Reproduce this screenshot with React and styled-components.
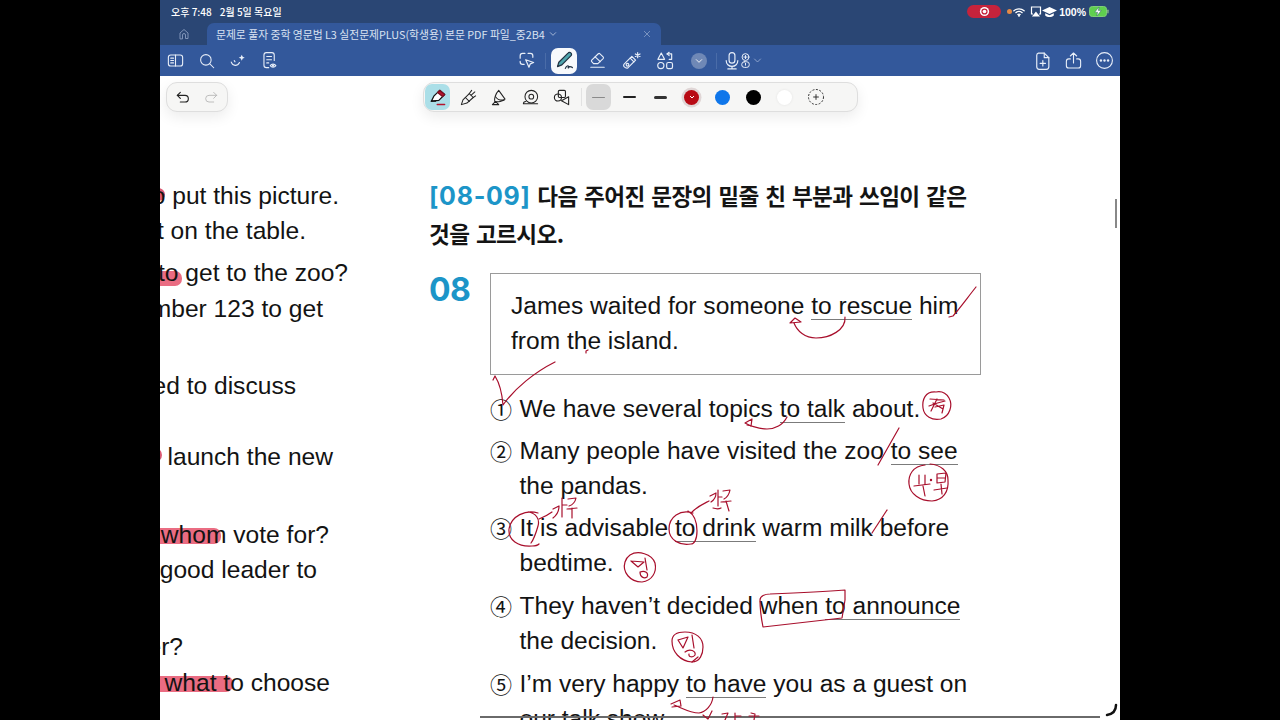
import React from 'react';
import styled, { createGlobalStyle } from 'styled-components';

const Global = createGlobalStyle`
  html, body { margin: 0; padding: 0; background: #000; height: 100%; }
  #root { height: 100%; }
`;

const KR = `"Noto Sans CJK KR", "Noto Sans", sans-serif`;
const LATIN = `"Liberation Sans", "Noto Sans CJK KR", sans-serif`;

const Screen = styled.div`
  position: relative;
  width: 960px;
  height: 720px;
  margin: 0 auto;
  background: #fff;
  overflow: hidden;
  display: flex;
  flex-direction: column;
  font-family: ${LATIN};
`;

const StatusBar = styled.div`
  height: 23px;
  flex: none;
  background: #2a4674;
  color: #fff;
  display: flex;
  align-items: center;
  padding: 0 11px;
  font: 500 10px ${KR};
`;
const StatusTime = styled.span`margin-right: 8px;`;
const StatusRight = styled.div`
  margin-left: auto;
  display: flex;
  align-items: center;
`;
const RecPill = styled.div`
  width: 34px;
  height: 13px;
  border-radius: 7px;
  background: #c5233c;
  display: flex;
  align-items: center;
  justify-content: center;
  margin-right: 6px;
`;
const OrangeDot = styled.span`
  flex: none;
  width: 5px;
  height: 5px;
  border-radius: 50%;
  background: #e58a45;
`;
const StatusGlyph = styled.span`
  display: flex;
  margin-left: ${p => p.$ml || 0}px;
`;
const Percent = styled.span`
  font: 700 10.5px ${LATIN};
  margin: 0 3px 0 2px;
`;

const TabBar = styled.div`
  height: 22px;
  flex: none;
  background: #2a4674;
  display: flex;
  align-items: stretch;
`;
const HomeSlot = styled.div`
  width: 47px;
  display: flex;
  align-items: center;
  justify-content: center;
  color: #8ea2c4;
`;
const Tab = styled.div`
  width: 454px;
  background: #33589b;
  border-radius: 7px 7px 0 0;
  display: flex;
  align-items: center;
  padding: 0 10px 0 9px;
  box-sizing: border-box;
  color: #d9e2f1;
  font: 400 10.8px ${KR};
  white-space: nowrap;
`;
const TabClose = styled.span`margin-left: auto; display: flex; color: #9db1d3;`;
const TabChevron = styled.span`margin-left: 4px; display: flex;`;

const ToolBar = styled.div`
  height: 31px;
  flex: none;
  background: #33589b;
  color: #e8eef8;
  display: flex;
  align-items: center;
`;
const ToolGroup = styled.div`
  display: flex;
  align-items: center;
  margin-left: ${p => p.$ml || 0}px;
`;
const ToolSlot = styled.div`
  width: ${p => p.$w || 31}px;
  height: 26px;
  display: flex;
  align-items: center;
  justify-content: center;
`;
const ActiveTile = styled.div`
  width: 26px;
  height: 26px;
  border-radius: 7px;
  background: #f7f9fc;
  display: flex;
  align-items: center;
  justify-content: center;
  margin: 0 3px;
`;
const RoundChevron = styled.div`
  width: 16px;
  height: 16px;
  border-radius: 50%;
  background: #6f88b6;
  display: flex;
  align-items: center;
  justify-content: center;
`;
const BarDivider = styled.span`
  width: 1px;
  height: 16px;
  background: #4a6ca8;
  flex: none;
  margin: 0 ${p => p.$mr ?? 0}px 0 ${p => p.$ml ?? 0}px;
`;
const VoiceBadge = styled.span`
  display: flex;
  margin-left: -9px;
`;
const VoiceChevron = styled.span`
  display: flex;
  color: #a8badb;
`;

const FloatRow = styled.div`
  flex: none;
  height: 30px;
  padding-top: 6px;
  display: flex;
  align-items: stretch;
  padding-left: 6px;
`;
const Pill = styled.div`
  box-sizing: border-box;
  height: 30px;
  background: #f6f6f5;
  border: 1px solid #dedede;
  border-radius: 11px;
  box-shadow: 0 5px 14px rgba(0,0,0,.08);
  display: flex;
  align-items: center;
`;
const UndoPill = styled(Pill)`
  width: 62px;
  justify-content: space-around;
  padding: 0 2px;
  color: #222;
`;
const PenPill = styled(Pill)`
  width: 435px;
  margin-left: 195px;
  padding-left: 1px;
  color: #222;
`;
const PenSlot = styled.div`
  flex: none;
  width: 25px;
  height: 26px;
  margin-right: 6px;
  border-radius: 7px;
  background: ${p => p.$bg || 'transparent'};
  display: flex;
  align-items: center;
  justify-content: center;
`;
const PenDivider = styled.span`
  flex: none;
  width: 1px;
  height: 18px;
  background: #e2e2e2;
  margin: 0 4px 0 1px;
`;
const Stroke = styled.span`
  display: block;
  width: 13px;
  height: ${p => p.$h}px;
  border-radius: 2px;
  background: ${p => p.$c};
`;
const Swatch = styled.span`
  display: flex;
  align-items: center;
  justify-content: center;
  width: 15px;
  height: 15px;
  border-radius: 50%;
  background: ${p => p.$c};
  box-shadow: ${p => p.$ring || 'none'};
`;

const Pages = styled.div`
  flex: 1;
  min-height: 0;
  display: grid;
  grid-template-columns: 269px 1fr;
  color: #131313;
`;
const LeftColumn = styled.div`
  overflow: hidden;
  padding-top: 66px;
  font-size: 24.6px;
  line-height: 35px;
`;
const LeftInner = styled.div`
  position: relative;
  z-index: 0;
`;
const LeftLine = styled.div`
  position: relative;
  display: flex;
  justify-content: flex-end;
  width: ${p => p.$end}px;
  margin-top: ${p => p.$gap || 0}px;
  white-space: pre;
  height: 35px;
`;
const Mark = styled.span`
  position: relative;
  &::before {
    content: '';
    position: absolute;
    z-index: -1;
    left: -30px;
    right: ${p => p.$trim || 0}px;
    top: ${p => p.$top}px;
    height: ${p => p.$h}px;
    background: ${p => p.$c || '#ea6c82'};
    border-radius: 7px;
  }
`;

const RightColumn = styled.div`
  padding-top: 65px;
`;
const Heading = styled.h2`
  margin: 0;
  font: 700 22.6px/37px ${KR};
  letter-spacing: -0.6px;
  word-spacing: 2px;
  color: #141414;
  width: 560px;
`;
const Range = styled.span`
  font-family: "Inter", sans-serif;
  font-weight: 700;
  font-size: 25px;
  letter-spacing: 0.7px;
  color: #1c95c8;
`;
const Question = styled.div`
  display: grid;
  grid-template-columns: 61px 491px;
  margin-top: 21px;
`;
const QNum = styled.div`
  font: 700 32px/34px "Inter", sans-serif;
  letter-spacing: -0.5px;
  color: #1c95c8;
`;
const Box = styled.div`
  box-sizing: border-box;
  height: 102px;
  border: 1px solid #9a9a9a;
  padding: 14px 0 0 20px;
  font-size: 24.55px;
  line-height: 35px;
  white-space: nowrap;
`;
const Under = styled.span`
  border-bottom: 1px solid #7b7b7b;
`;
const Options = styled.ol`
  list-style: none;
  margin: 16px 0 0 61px;
  padding: 0;
`;
const Option = styled.li`
  display: grid;
  grid-template-columns: 29.5px 1fr;
  margin-top: ${p => p.$gap}px;
  font-size: 24.55px;
  line-height: 35px;
  white-space: nowrap;
`;
const Marker = styled.span`
  font: 400 22px/35px ${KR};
`;

const Ink = styled.svg`
  position: absolute;
  inset: 0;
  pointer-events: none;
`;
const ScrollThumb = styled.span`
  position: absolute;
  right: 3px;
  top: 199px;
  width: 2px;
  height: 29px;
  background: #888;
`;
const BottomRule = styled.span`
  position: absolute;
  left: 320px;
  bottom: 2px;
  width: 620px;
  height: 2px;
  background: #6a6a6a;
`;

const Ic = ({ s = 18, w = 1.5, children, c = 'currentColor' }) => (
  <svg width={s} height={s} viewBox="0 0 24 24" fill="none" stroke={c} strokeWidth={w} strokeLinecap="round" strokeLinejoin="round">{children}</svg>
);

const Chevron = ({ s = 8, c = 'currentColor', w = 2 }) => <Ic s={s} w={w} c={c}><path d="M4 8l8 8 8-8" /></Ic>;

const App = () => (
  <>
    <Global />
    <Screen>
      <StatusBar>
        <StatusTime>오후 7:48</StatusTime>
        <span>2월 5일 목요일</span>
        <StatusRight>
          <RecPill>
            <svg width="11" height="11" viewBox="0 0 12 12"><circle cx="6" cy="6" r="5" fill="#fff" /><circle cx="6" cy="6" r="3.4" fill="#c5233c" /><circle cx="6" cy="6" r="2" fill="#fff" /></svg>
          </RecPill>
          <OrangeDot />
          <StatusGlyph $ml={1}>
            <svg width="12" height="10" viewBox="0 0 14 11" fill="none" stroke="#fff" strokeWidth="1.5" strokeLinecap="round"><path d="M1 4c3.400-3 8.600-3 12 0" /><path d="M3.300 6.300c2.200-1.800 5.200-1.800 7.400 0" /><path d="M5.600 8.400c.8-.6 2-.6 2.800 0" /><circle cx="7" cy="9.800" r=".5" fill="#fff" /></svg>
          </StatusGlyph>
          <StatusGlyph $ml={5}>
            <svg width="12" height="11" viewBox="0 0 12 11" fill="none" stroke="#fff" strokeWidth="1.2"><path d="M3 8H1.500V1h9v7H9" /><path d="M6 6.500L8.800 10H3.200z" fill="#fff" /></svg>
          </StatusGlyph>
          <StatusGlyph $ml={0}>
            <svg width="15" height="12" viewBox="0 0 15 12" fill="#fff"><path d="M7.500 1L15 4.600 7.500 8 0 4.600z" /><path d="M3.200 7.200v2.200c2.400 2.200 6.200 2.200 8.600 0V7.200L7.500 9.200z" /></svg>
          </StatusGlyph>
          <Percent>100%</Percent>
          <svg width="20" height="11" viewBox="0 0 20 11"><rect x=".5" y=".5" width="17" height="10" rx="2.800" fill="#5fcf4f" stroke="#7fcf77" /><rect x="18.300" y="3.600" width="1.300" height="3.800" rx=".6" fill="#8fbf8a" /><path d="M10 1L5.800 6.200h2.800L7.800 10l4.400-5.400H9.300z" fill="#fff" stroke="#2a4674" strokeWidth=".4" /></svg>
        </StatusRight>
      </StatusBar>

      <TabBar>
        <HomeSlot>
          <Ic s={12} w={1.7}><path d="M4 21V10l8-7 8 7v11h-5v-7a3 3 0 0 0-6 0v7z" /></Ic>
        </HomeSlot>
        <Tab>
          문제로 풀자 중학 영문법 L3 실전문제PLUS(학생용) 본문 PDF 파일_중2B4
          <TabChevron><Chevron s={8} c="#d9e2f1" /></TabChevron>
          <TabClose><Ic s={8} w={2}><path d="M4 4l16 16M20 4L4 20" /></Ic></TabClose>
        </Tab>
      </TabBar>

      <ToolBar>
        <ToolGroup>
          <ToolSlot>
            <Ic s={19} w={1.4}><rect x="3" y="5" width="18" height="14" rx="3" /><path d="M12 5v14M6 9h3.500M6 12h3.500M6 15h3.500" /></Ic>
          </ToolSlot>
          <ToolSlot>
            <Ic s={18} w={1.4}><circle cx="10.500" cy="10.500" r="7" /><path d="M15.800 15.800L21 21" /></Ic>
          </ToolSlot>
          <ToolSlot $w={32}>
            <Ic s={18} w={1.5}><path d="M3 13.500c2 5.500 8 6 11 .5" /><path d="M17 3.500l1.300 2.700 2.700 1.300-2.700 1.300L17 11.500l-1.300-2.700L13 7.500l2.700-1.300z" fill="currentColor" stroke="none" /><path d="M7 11.500l1 1.600" /></Ic>
          </ToolSlot>
          <ToolSlot $w={30}>
            <Ic s={19} w={1.4}><path d="M11 21H8a3 3 0 0 1-3-3V5a3 3 0 0 1 3-3h7a3 3 0 0 1 3 3v7" /><path d="M8.500 7h6M8.500 11h6M8.500 15h2.500" /><path d="M13 18.500c1.600-2.600 5.400-2.600 7 0-1.600 2.600-5.400 2.600-7 0z" /><circle cx="16.500" cy="18.500" r=".8" /></Ic>
          </ToolSlot>
        </ToolGroup>
        <ToolGroup $ml={227}>
          <ToolSlot $w={31}>
            <Ic s={19} w={1.5}><path d="M10 3H7a3 3 0 0 0-3 3v3M4 13v1a3 3 0 0 0 3 3h2M14 3h3a3 3 0 0 1 3 3v2" /><path d="M11 11l10 3.500-4.200 1.700-1.700 4.300z" /></Ic>
          </ToolSlot>
          <BarDivider $ml={3} $mr={2} />
          <ActiveTile>
            <svg width="21" height="21" viewBox="0 0 24 24" fill="none" stroke="#234" strokeWidth="1.4" strokeLinejoin="round" strokeLinecap="round"><path d="M4 19l1.500-5L16 3.500a2.300 2.300 0 0 1 3.500 3L9 17z" fill="#4fa4ad" /><path d="M13 21c1-3 3.500-3.500 4-1.800.3 1.300-1.200 1.800-.8.800.5-1.300 3-1.500 4.800 0" /></svg>
          </ActiveTile>
          <ToolSlot $w={34}>
            <Ic s={19} w={1.4}><path d="M7 16l-2.300-2.500a1.500 1.500 0 0 1 0-2L13 3.500a1.500 1.500 0 0 1 2.100 0l4 4a1.500 1.500 0 0 1 0 2.100L12.500 16z" /><path d="M9 7.500l6.500 6" /><path d="M3.500 20.500h17" /></Ic>
          </ToolSlot>
          <ToolSlot $w={34}>
            <Ic s={20} w={1.4}><path d="M4 15.500l9-9 4.500 4.500-9 9c-1.500 1-3.500 0-4.500-1s-1.300-2.200 0-3.500z" /><circle cx="7.800" cy="16.500" r="1.600" /><path d="M11 8.500l4.500 4.500" /><path d="M20 2v6M17.200 3.500l5.600 3M22.800 3.500l-5.600 3" /></Ic>
          </ToolSlot>
          <ToolSlot $w={34}>
            <Ic s={20} w={1.4}><path d="M7.500 2.500L11.500 10h-8z" /><path d="M14.500 3.500h5.500v6.500h-3" /><path d="M17 1.500l-2.500 2 2.500 2" /><circle cx="7" cy="17.500" r="3.700" /><rect x="14" y="13.800" width="7" height="7.400" rx="2" /></Ic>
          </ToolSlot>
          <ToolSlot $w={34}>
            <RoundChevron><Chevron s={8} c="#fff" w={2.6} /></RoundChevron>
          </ToolSlot>
          <BarDivider />
          <ToolSlot $w={30}>
            <Ic s={20} w={1.4}><rect x="8.500" y="2" width="7" height="12.500" rx="3.500" /><path d="M5 11.500c0 4 3 7 7 7s7-3 7-7M12 18.500v3M7 21.500h10" /></Ic>
          </ToolSlot>
          <VoiceBadge>
            <Ic s={15} w={1.6}><circle cx="12" cy="6.500" r="5.500" /><path d="M12 4v5M9.500 6.500h5" /><rect x="6" y="14" width="12" height="9" rx="4" /><path d="M12 16.500v3" /></Ic>
          </VoiceBadge>
          <VoiceChevron><Chevron s={9} w={2} /></VoiceChevron>
        </ToolGroup>
        <ToolGroup $ml={265}>
          <ToolSlot>
            <Ic s={20} w={1.4}><path d="M6.500 2.500h7L19 8v11a3 3 0 0 1-3 3H7.500a3 3 0 0 1-3-3V5a2.500 2.500 0 0 1 2-2.500z" /><path d="M13.500 2.500V8H19" /><path d="M11.800 11.500v6.500M8.500 14.800h6.500" /></Ic>
          </ToolSlot>
          <ToolSlot>
            <Ic s={19} w={1.4}><path d="M12 15V2.500M8 6.300l4-3.800 4 3.800" /><path d="M8 10H6a3 3 0 0 0-3 3v5.500a3 3 0 0 0 3 3h12a3 3 0 0 0 3-3V13a3 3 0 0 0-3-3h-2" /></Ic>
          </ToolSlot>
          <ToolSlot>
            <svg width="19" height="19" viewBox="0 0 24 24" fill="none" stroke="currentColor" strokeWidth="1.4"><circle cx="12" cy="12" r="10" /><circle cx="7.500" cy="12" r="1.500" fill="currentColor" stroke="none" /><circle cx="12" cy="12" r="1.500" fill="currentColor" stroke="none" /><circle cx="16.500" cy="12" r="1.500" fill="currentColor" stroke="none" /></svg>
          </ToolSlot>
        </ToolGroup>
      </ToolBar>

      <FloatRow>
        <UndoPill>
          <Ic s={16} w={1.7}><path d="M8 5L3.500 9.500 8 14" /><path d="M3.500 9.500H15a5 5 0 0 1 0 10H8" /></Ic>
          <Ic s={16} w={1.3} c="#b5b5b5"><path d="M16 5l4.500 4.500L16 14" /><path d="M20.500 9.500H9a5 5 0 0 0 0 10h7" /></Ic>
        </UndoPill>
        <PenPill>
          <PenSlot $bg="#abdfe8">
            <svg width="20" height="20" viewBox="0 0 24 24" fill="none" stroke="#111" strokeWidth="1.5" strokeLinejoin="round" strokeLinecap="round"><path d="M4 17l3-6 7-7 6 5-7 7z" fill="#fff" /><path d="M11.500 6.500l2.500-2.500 6 5-2.500 2.500z" fill="#b5142c" stroke="#7a1020" /><path d="M4 17l5 0" /><path d="M11 21h9" stroke="#b5142c" strokeWidth="1.6" /></svg>
          </PenSlot>
          <PenSlot>
            <Ic s={19} w={1.3}><path d="M3 21l2-6 8-8 5 5-8 7z" /><path d="M8 12l5 5" /><path d="M13 7l3-4M15.500 9l4.500-4M18 12l3-2" /></Ic>
          </PenSlot>
          <PenSlot>
            <Ic s={19} w={1.3}><path d="M11 3l8 11c-3 3-9 4-13 3-1-3 1-10 5-14z" /><path d="M7 11c2 3 6 5 11 4" /><path d="M3 21h8l-4-4z" /></Ic>
          </PenSlot>
          <PenSlot>
            <Ic s={19} w={1.3}><circle cx="13" cy="11" r="8" /><circle cx="13" cy="11" r="3" /><path d="M3 20h18M3 20c0-2 1-3 3-3" /></Ic>
          </PenSlot>
          <PenSlot>
            <Ic s={19} w={1.4}><rect x="8" y="3" width="9" height="9" rx="1.500" /><circle cx="7.500" cy="12" r="4.500" /><path d="M12 16l9-5v10z" /></Ic>
          </PenSlot>
          <PenDivider />
          <PenSlot $bg="#d9d9d9"><Stroke $h={1} $c="#8a8a8a" /></PenSlot>
          <PenSlot><Stroke $h={2} $c="#222" /></PenSlot>
          <PenSlot><Stroke $h={3} $c="#333" /></PenSlot>
          <PenSlot>
            <Swatch $c="#b80a14" $ring="0 0 0 2.5px #e0d6d6">
              <svg width="6" height="4" viewBox="0 0 6 4" fill="none" stroke="#fff" strokeWidth="1"><path d="M1 1l2 2 2-2" /></svg>
            </Swatch>
          </PenSlot>
          <PenSlot><Swatch $c="#0f76ea" /></PenSlot>
          <PenSlot><Swatch $c="#000" /></PenSlot>
          <PenSlot><Swatch $c="#fff" $ring="0 0 3px rgba(0,0,0,.08)" /></PenSlot>
          <PenSlot>
            <svg width="18" height="18" viewBox="0 0 18 18" fill="none" stroke="#333"><circle cx="9" cy="9" r="7.500" strokeDasharray="2 1.500" /><path d="M9 6.200v5.600M6.200 9h5.600" strokeWidth="1" /></svg>
          </PenSlot>
        </PenPill>
      </FloatRow>

      <Pages>
        <LeftColumn>
          <LeftInner>
            <LeftLine $end={179}><span>Where <Mark $top={6} $h={13} $c="#dc5a74">to</Mark> put this picture.</span></LeftLine>
            <LeftLine $end={146}>You can put it on the table.</LeftLine>
            <LeftLine $end={188} $gap={7}><span>How <Mark $top={12} $h={15} $trim={-4}>to</Mark> get to the zoo?</span></LeftLine>
            <LeftLine $end={163} $gap={1}>Take bus number 123 to get</LeftLine>
            <LeftLine $end={136} $gap={42}>We need to discuss</LeftLine>
            <LeftLine $end={173} $gap={36}><span>When <Mark $top={5} $h={14} $trim={-1} $c="#dc5a74">to</Mark> launch the new</span></LeftLine>
            <LeftLine $end={169} $gap={43}><span>Do you know <Mark $top={7} $h={16} $trim={5}>whom</Mark> vote for?</span></LeftLine>
            <LeftLine $end={157}>Choose a good leader to</LeftLine>
            <LeftLine $end={23} $gap={42}>dinner?</LeftLine>
            <LeftLine $end={170} $gap={1}><span>I know <Mark $top={7} $h={16} $trim={-3}>what t</Mark>o choose</span></LeftLine>
          </LeftInner>
        </LeftColumn>
        <RightColumn>
          <Heading><Range>[08-09]</Range> 다음 주어진 문장의 밑줄 친 부분과 쓰임이 같은<br />것을 고르시오.</Heading>
          <Question>
            <QNum>08</QNum>
            <Box>James waited for someone <Under>to rescue</Under> him<br />from the island.</Box>
          </Question>
          <Options>
            <Option $gap={0}><Marker>①</Marker><span>We have several topics <Under>to talk</Under> about.</span></Option>
            <Option $gap={7}><Marker>②</Marker><span>Many people have visited the zoo <Under>to see</Under><br />the pandas.</span></Option>
            <Option $gap={7}><Marker>③</Marker><span>It is advisable <Under>to drink</Under> warm milk before<br />bedtime.</span></Option>
            <Option $gap={8}><Marker>④</Marker><span>They haven’t decided when <Under>to announce</Under><br />the decision.</span></Option>
            <Option $gap={8}><Marker>⑤</Marker><span>I’m very happy <Under>to have</Under> you as a guest on<br />our talk show.</span></Option>
          </Options>
        </RightColumn>
      </Pages>

      <ScrollThumb />
      <BottomRule />

      <Ink width="960" height="720" viewBox="160 0 960 720" fill="none" stroke="#a80f2c" strokeWidth="1.2" strokeLinecap="round" strokeLinejoin="round">
        <path d="M845 317C846 330 830 338 816 338C805 338 797 331 794 323" />
        <path d="M790 323L795 318L801 322Z" />
        <path d="M949 317L953 316C960 308 968 297 976 287" />
        <path d="M586 353L586 351L588 350" />
        <path d="M555 362C535 372 515 388 503 405C502 392 500 384 495 376L493 380" />
        <path d="M787 417C783 425 775 429 767 429C759 429 753 426 747 425" />
        <path d="M745 423L752 419L751 426Z" />
        <path d="M936 392C925 391 922 400 923 408C924 416 932 421 941 419C950 416 953 405 949 398C946 393 941 391 936 392" />
        <path d="M930 399L944 400M929 406C934 404 940 402 945 401M937 399L931 411M935 407L944 405L942 413M933 403L943 409" />
        <path d="M878 465L899 428" />
        <path d="M925 465C913 466 908 475 909 484C910 494 920 501 932 501C943 500 949 492 948 480C948 471 941 465 930 464" />
        <path d="M919 475L919 484M925 475L925 484M914 486L930 484M923 486L925 496" />
        <path d="M937 474L946 473L945 482L937 483ZM937 478L945 478M941 484L942 494M934 490L947 488" />
        <circle cx="931" cy="480" r=".6" />
        <path d="M538 513C526 509 511 516 509 529C508 540 518 547 532 546C536 546 538 545 539 544M528 512C536 513 540 519 538 526C536 533 534 539 531 543" />
        <path d="M539 519C544 517 548 515 552 512" />
        <path d="M553 509L559 506C559 511 557 515 553 518M562 498L562 517M562 505L567 505" />
        <path d="M568 499L576 498C575 503 572 505 569 506M567 509L577 508M572 508L572 518" />
        <path d="M693 513C680 509 669 517 669 529C669 540 680 546 691 544C694 544 697 540 697 531C697 522 695 515 688 511" />
        <path d="M692 512C698 506 703 504 709 501" />
        <path d="M710 496L716 493C716 497 714 500 711 502M718 490L718 506M718 497L722 497" />
        <path d="M713 508C716 509 719 509 721 508M723 491L730 490C729 495 726 498 724 499M721 502L731 501M726 501L729 511" />
        <path d="M872 533L887 510" />
        <path d="M625 562C622 572 630 582 642 582C652 581 657 572 655 563C652 554 638 550 630 555C627 557 626 559 625 562" />
        <path d="M631 561L638 567L644 562L631 561M645 558L647 570M640 572C645 570 649 573 647 577C644 579 640 577 640 572" />
        <path d="M760 600C760 596 765 594 770 594C795 593 820 592 845 590L845 600L842 618C815 621 790 624 763 627C761 617 760 608 760 600" />
        <path d="M672 641C672 652 680 661 692 662C700 662 703 654 703 647C703 638 696 632 685 632C677 632 672 635 672 641" />
        <path d="M678 640L688 637L683 648L678 640M692 635L694 648M685 652C690 648 696 651 695 655C693 658 688 657 689 654" />
        <path d="M692 662L698 657" />
        <path d="M713 697C712 705 706 712 699 713C690 713 682 708 674 705" />
        <path d="M671 704L680 700L681 706L672 707" />
        <path d="M703 715L708 719L712 711M722 714L728 713L725 720M735 713L735 720M735 716L741 716M751 713L755 714L754 720M749 716L759 716" />
      </Ink>
      <Ink width="960" height="720" viewBox="160 0 960 720" fill="none" stroke="#111" strokeWidth="2.5" strokeLinecap="round">
        <path d="M1116 705C1116 711 1113 714 1107 715" />
      </Ink>
    </Screen>
  </>
);

export default App;
